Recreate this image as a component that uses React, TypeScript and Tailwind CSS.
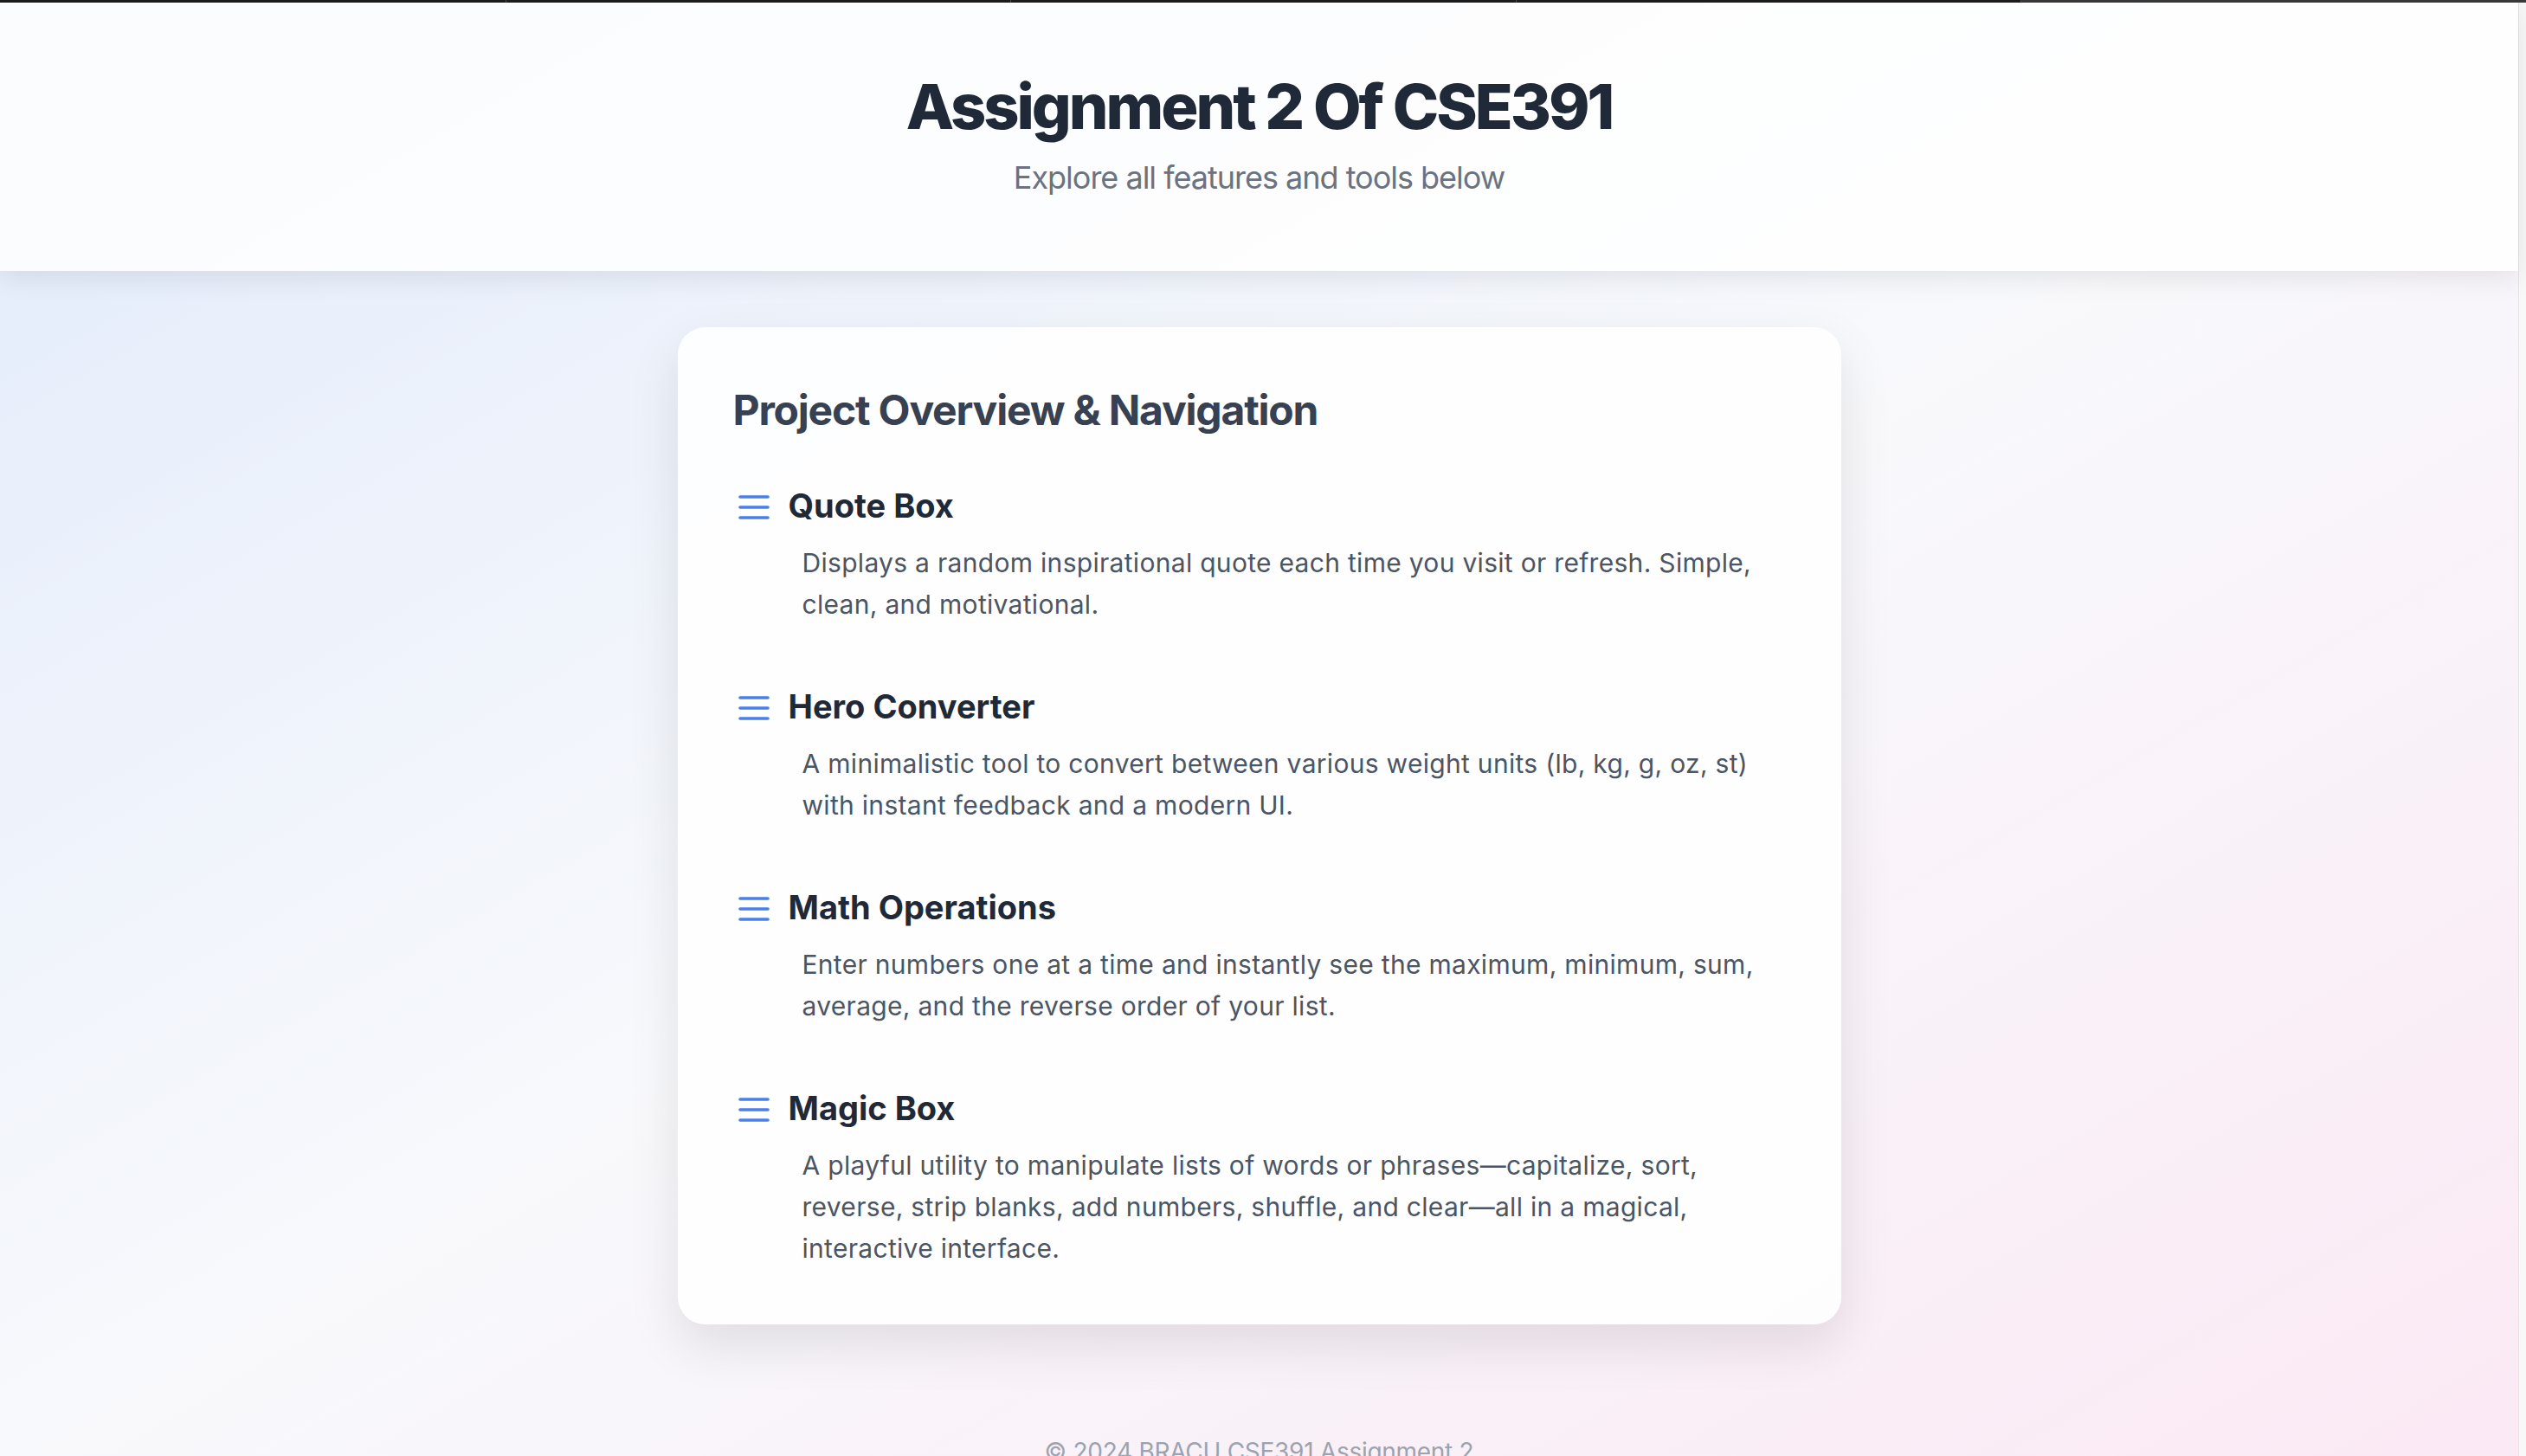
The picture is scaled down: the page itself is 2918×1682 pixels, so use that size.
import React from "react";

type Feature = {
  title: string;
  text: string;
};

const features: Feature[] = [
  {
    title: "Quote Box",
    text: "Displays a random inspirational quote each time you visit or refresh. Simple, clean, and motivational.",
  },
  {
    title: "Hero Converter",
    text: "A minimalistic tool to convert between various weight units (lb, kg, g, oz, st) with instant feedback and a modern UI.",
  },
  {
    title: "Math Operations",
    text: "Enter numbers one at a time and instantly see the maximum, minimum, sum, average, and the reverse order of your list.",
  },
  {
    title: "Magic Box",
    text: "A playful utility to manipulate lists of words or phrases—capitalize, sort, reverse, strip blanks, add numbers, shuffle, and clear—all in a magical, interactive interface.",
  },
];

function MenuIcon() {
  return (
    <svg
      viewBox="0 0 24 24"
      className="w-12 h-12 shrink-0 translate-y-[2px] text-[#4a7fe9]"
      fill="none"
      stroke="currentColor"
      strokeWidth={1.8}
      strokeLinecap="round"
    >
      <line x1="4" x2="20" y1="6" y2="6" />
      <line x1="4" x2="20" y1="12" y2="12" />
      <line x1="4" x2="20" y1="18" y2="18" />
    </svg>
  );
}

export default function App() {
  return (
    <div className="h-screen overflow-hidden flex flex-col font-['Inter','Liberation_Sans',sans-serif]">
      {/* window edge */}
      <div className="h-[3px] shrink-0 grid grid-cols-5 bg-[#1d1d1d]">
        <div />
        <div className="border-l border-[#4a4a4a]" />
        <div className="border-l border-[#4a4a4a]" />
        <div className="border-l border-[#4a4a4a]" />
        <div className="border-l border-[#4a4a4a] bg-[#3a3a3a]" />
      </div>

      <div className="flex-1 flex min-h-0">
        <div className="flex-1 flex flex-col bg-linear-to-br from-[#e2ebfb] via-[#f8f9fc] to-[#fbe9f4]">
          <header className="relative z-10 bg-white/85 py-[80px] text-center shadow-[0_8px_30px_rgba(0,0,0,0.09)]">
            <h1 className="text-[72px] leading-[80px] font-extrabold tracking-[-0.042em] text-[#1f2937]">
              Assignment 2 Of CSE391
            </h1>
            <p className="mt-[14px] text-[36px] leading-[56px] tracking-[-0.028em] text-[#6b7280]">
              Explore all features and tools below
            </p>
          </header>

          <main className="flex justify-center pt-[65px]">
            <section className="w-[1344px] rounded-[32px] bg-white/90 p-16 shadow-[0_24px_60px_rgba(0,0,0,0.10)]">
              <h2 className="mb-[46px] text-[48px] leading-[64px] font-bold tracking-[-0.025em] text-[#374151]">
                Project Overview &amp; Navigation
              </h2>
              <ul className="flex flex-col gap-[62px]">
                {features.map((f) => (
                  <li key={f.title}>
                    <div className="mt-[4px] flex items-center gap-4">
                      <MenuIcon />
                      <h3 className="text-[38px] leading-[56px] font-bold text-[#1f2937]">
                        {f.title}
                      </h3>
                    </div>
                    <p className="ml-[80px] mt-[14px] text-[30px] leading-[48px] tracking-[0.01em] text-[#4b5563]">
                      {f.text}
                    </p>
                  </li>
                ))}
              </ul>
            </section>
          </main>

          <footer className="mt-[127px] text-center text-[28px] leading-[40px] tracking-[-0.01em] text-[#9ca3af]">
            © 2024 BRACU CSE391 Assignment 2
          </footer>
        </div>
        <div className="w-[9px] shrink-0 border-l border-[#e4e4e4] bg-[#f8f8f8]" />
      </div>
    </div>
  );
}
